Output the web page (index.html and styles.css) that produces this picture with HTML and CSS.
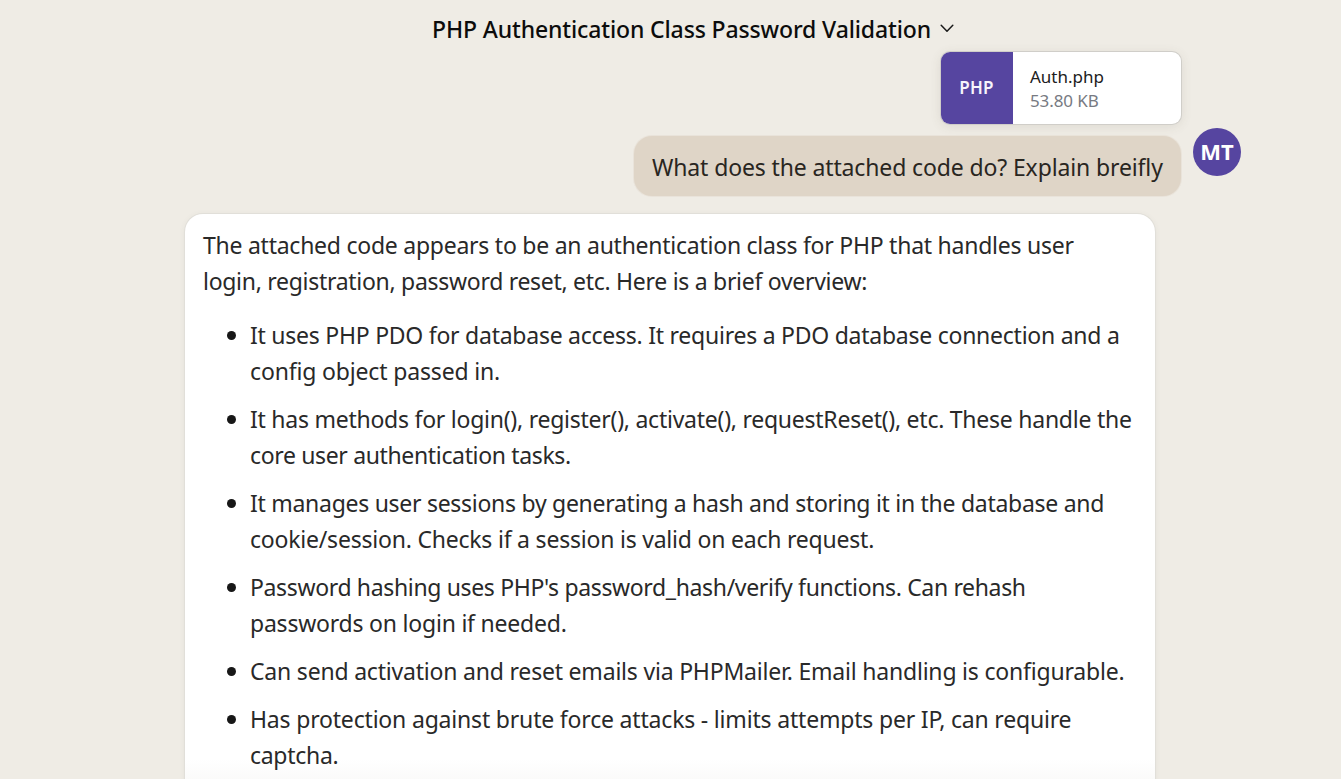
FILE: index.html
```html
<!DOCTYPE html>
<html lang="en">
<head>
<meta charset="utf-8">
<title>PHP Authentication Class Password Validation</title>
<link rel="stylesheet" href="styles.css">
</head>
<body>
<div class="page">
  <header class="title-bar">
    <h1 class="title">PHP Authentication Class Password Validation</h1>
    <svg class="chevron" width="14" height="9" viewBox="0 0 14 9" fill="none" stroke="#191919" stroke-width="1.5" stroke-linecap="round" stroke-linejoin="round"><path d="M1.2 1.3 7 7.2l5.8-5.9"/></svg>
  </header>
  <main class="thread">
    <section class="user-turn">
      <div class="user-content">
        <div class="file">
          <div class="file-type">PHP</div>
          <div class="file-info">
            <div class="file-name">Auth.php</div>
            <div class="file-size">53.80 KB</div>
          </div>
        </div>
        <div class="bubble"><span class="line t13">What does the attached code do? Explain breifly</span></div>
      </div>
      <div class="avatar">MT</div>
    </section>
    <article class="answer">
      <p class="intro">
        <span class="line t25">The attached code appears to be an authentication class for PHP that handles user</span>
        <span class="line t29">login, registration, password reset, etc. Here is a brief overview:</span>
      </p>
      <ul class="points">
        <li>
          <span class="line t25">It uses PHP PDO for database access. It requires a PDO database connection and a</span>
          <span class="line t16">config object passed in.</span>
        </li>
        <li>
          <span class="line t25">It has methods for login(), register(), activate(), requestReset(), etc. These handle the</span>
          <span class="line t35">core user authentication tasks.</span>
        </li>
        <li>
          <span class="line t28">It manages user sessions by generating a hash and storing it in the database and</span>
          <span class="line t21">cookie/session. Checks if a session is valid on each request.</span>
        </li>
        <li>
          <span class="line t35">Password hashing uses PHP's password_hash/verify functions. Can rehash</span>
          <span class="line t21">passwords on login if needed.</span>
        </li>
        <li>
          <span class="line t20">Can send activation and reset emails via PHPMailer. Email handling is configurable.</span>
        </li>
        <li>
          <span class="line t18">Has protection against brute force attacks - limits attempts per IP, can require</span>
          <span class="line t29">captcha.</span>
        </li>
      </ul>
    </article>
  </main>
  <div class="fade"></div>
</div>
</body>
</html>
```

FILE: styles.css
```css
* { box-sizing: border-box; }

body {
  margin: 0;
  background: #efece5;
  font-family: "Noto Sans", "Open Sans", sans-serif;
}

.page {
  position: relative;
  height: 779px;
  overflow: hidden;
}

.title-bar {
  display: flex;
  align-items: flex-start;
  gap: 9px;
  height: 52px;
  padding: 11px 0 0 432px;
}

.title {
  margin: 0;
  font-size: 23px;
  font-weight: 500;
  line-height: 36px;
  letter-spacing: -0.13px;
  white-space: nowrap;
  color: #0c0c0c;
}

.chevron { margin-top: 13px; }

.thread {
  width: 1056px;
  margin-left: 185px;
}

.user-turn {
  display: flex;
  justify-content: flex-end;
  align-items: flex-start;
  gap: 12px;
}

.user-content {
  display: flex;
  flex-direction: column;
  align-items: flex-end;
  gap: 12px;
}

.file {
  display: flex;
  width: 240px;
  height: 72px;
  overflow: hidden;
  border-radius: 9px;
  background: #fff;
  box-shadow: 0 0 0 1px #d0cec9, 0 2px 12px rgba(80, 75, 60, 0.12);
}

.file-type {
  display: grid;
  place-items: center;
  width: 72px;
  padding: 0 1px 2px 0;
  font-size: 17px;
  font-weight: 600;
  letter-spacing: 0.2px;
  color: #f7f4fb;
  background: #5645a0;
}

.file-info {
  padding: 13px 0 0 17px;
  font-size: 17px;
  line-height: 24px;
}

.file-name { color: #202020; }

.file-size {
  letter-spacing: -0.1px;
  color: #777a82;
}

.bubble {
  width: 547px;
  height: 60px;
  padding: 13px 18px 0;
  border-radius: 18px;
  color: #29261f;
  background: #dfd5c7;
  box-shadow: 0 0 0 1px rgba(223, 213, 199, 0.35);
}

.avatar {
  display: grid;
  place-items: center;
  width: 48px;
  height: 48px;
  margin-top: 76px;
  padding-bottom: 2px;
  border-radius: 50%;
  font-size: 22px;
  font-weight: 700;
  color: #fff;
  background: #5645a0;
}

.answer {
  width: 970px;
  height: 620px;
  margin-top: 18px;
  padding: 13px 18px;
  border-radius: 18px;
  color: #292929;
  background: #fff;
  box-shadow: 0 0 0 1px #e1dfd9, 0 1px 6px rgba(80, 75, 60, 0.08);
}

.line {
  display: block;
  font-size: 23px;
  line-height: 36px;
  white-space: nowrap;
}

/* Tracking steps, in hundredths of a pixel */
.t13 { letter-spacing: -0.13px; }
.t16 { letter-spacing: -0.16px; }
.t18 { letter-spacing: -0.185px; }
.t20 { letter-spacing: -0.2px; }
.t21 { letter-spacing: -0.215px; }
.t25 { letter-spacing: -0.25px; }
.t28 { letter-spacing: -0.28px; }
.t29 { letter-spacing: -0.29px; }
.t35 { letter-spacing: -0.35px; }

.intro { margin: 0 0 18px; }

.points {
  display: grid;
  gap: 12px;
  margin: 0;
  padding: 0 0 0 47px;
  list-style: none;
}

.points li { position: relative; }

.points li::before {
  content: "";
  position: absolute;
  left: -23px;
  top: 14px;
  width: 9px;
  height: 9px;
  border-radius: 50%;
  background: #171717;
}

.fade {
  position: absolute;
  left: 185px;
  width: 970px;
  bottom: 0;
  height: 20px;
  background: linear-gradient(rgba(120, 110, 90, 0), rgba(120, 110, 90, 0.03));
}
```
